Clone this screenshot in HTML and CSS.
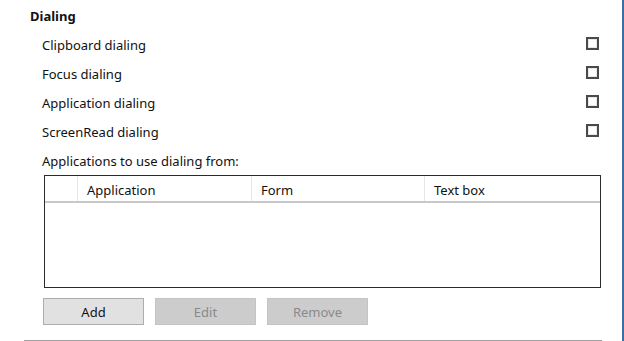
FILE: index.html
```html
<!DOCTYPE html>
<html lang="en">
<head>
  <meta charset="UTF-8">
  <title>Dialing</title>
  <link rel="stylesheet" href="styles.css">
</head>
<body>

  <div class="page">
    <div class="panel">
      <div class="title">Dialing</div>

      <div class="options">
        <div class="option">
          <span>Clipboard dialing</span>
          <span class="check"></span>
        </div>
        <div class="option">
          <span>Focus dialing</span>
          <span class="check"></span>
        </div>
        <div class="option">
          <span>Application dialing</span>
          <span class="check"></span>
        </div>
        <div class="option">
          <span>ScreenRead dialing</span>
          <span class="check"></span>
        </div>
        <div class="option">
          <span>Applications to use dialing from:</span>
        </div>
      </div>

      <div class="grid">
        <div class="grid-head">
          <div class="col col-sel"></div>
          <div class="col col-app">Application</div>
          <div class="col col-form">Form</div>
          <div class="col col-box">Text box</div>
        </div>
        <div class="grid-body"></div>
      </div>

      <div class="actions">
        <button class="btn">Add</button>
        <button class="btn" disabled>Edit</button>
        <button class="btn" disabled>Remove</button>
      </div>
    </div>

    <div class="edge"></div>
  </div>

</body>
</html>
```

FILE: styles.css
```css
* {
  margin: 0;
  padding: 0;
  box-sizing: border-box;
}

html,
body {
  overflow: hidden;
  background: #fff;
}

body {
  font-family: "Noto Sans", "Open Sans", sans-serif;
  font-size: 13px;
  color: #111;
}

.page {
  display: flex;
  height: 341px;
}

.panel {
  width: 578px;
  height: 341px;
  margin-left: 24px;
  border-bottom: 1px solid #a0a0a0;
}

.title {
  font-weight: bold;
  height: 30px;
  line-height: 20px;
  padding: 6px 0 0 6px;
}

.options {
  padding: 0 3px 0 18px;
}

.option {
  height: 29px;
  display: flex;
  justify-content: space-between;
  align-items: center;
}

.check {
  width: 13px;
  height: 13px;
  border: 2px solid #4a4a4a;
  background: #fff;
  margin-top: -2px;
  box-shadow: inset 0 0 0 1px #e8e8e8;
}

.grid {
  margin: 0 1px 0 20px;
  height: 113px;
  border: 1px solid #2b2b2b;
}

.grid-head {
  display: flex;
  height: 27px;
  border-bottom: 2px solid #c8c8c8;
}

.col {
  line-height: 26px;
  padding: 1px 0 0 9px;
  border-right: 1px solid #e6e6e6;
}

.col-sel {
  width: 33px;
}

.col-app {
  width: 174px;
}

.col-form {
  width: 173px;
}

.col-box {
  flex: 1;
  border-right: none;
}

.actions {
  display: flex;
  gap: 11px;
  margin: 10px 0 0 19px;
}

.btn {
  font: inherit;
  color: #111;
  width: 101px;
  height: 27px;
  background: #e1e1e1;
  border: 1px solid #adadad;
}

.btn:disabled {
  color: #8a8a8a;
  background: #cccccc;
  border-color: #c4c4c4;
}

.edge {
  flex: none;
  width: 2px;
  margin-left: 20px;
  background: #3b6fa8;
}
```
